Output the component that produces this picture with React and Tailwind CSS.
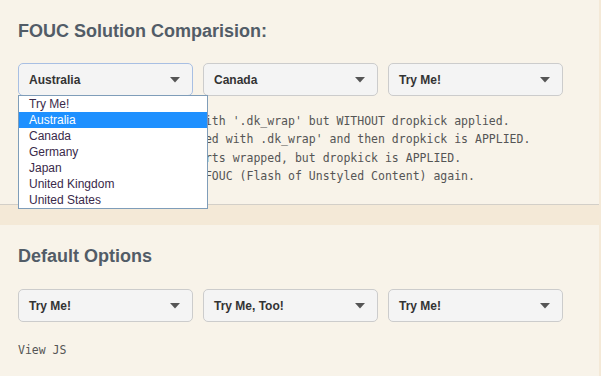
const countries = ["Try Me!", "Australia", "Canada", "Germany", "Japan", "United Kingdom", "United States"];

const notes = [
  "1. Left select is wrapped with '.dk_wrap' but WITHOUT dropkick applied.",
  "2. Middle one is also wrapped with .dk_wrap' and then dropkick is APPLIED.",
  "3. The 3rd select, also starts wrapped, but dropkick is APPLIED.",
  "4. Result: you never see a FOUC (Flash of Unstyled Content) again.",
];

const Arrow = () => (
  <svg width="10" height="6" viewBox="0 0 10 6" className="shrink-0">
    <path d="M0 0 L10 0 L5 5.5 Z" fill="#555" />
  </svg>
);

const Select = ({ label, focused }) => (
  <div
    className={`flex h-[33px] w-[175px] items-center justify-between rounded-[5px] border bg-[#f4f4f4] pl-[10px] pr-[12px] ${
      focused ? "border-[#a8bfe3]" : "border-[#cccccc]"
    }`}
  >
    <span className="text-[12px] font-bold text-[#333]">{label}</span>
    <Arrow />
  </div>
);

const App = () => {
  return (
    <div className="flex min-h-screen bg-[#f8f3e9] font-['Liberation_Sans',Arial,sans-serif]">
      <div className="flex-1">
        <section className="relative h-[205px] border-b border-[#d3cfc8] px-[18px] pt-[20px]">
          <h2 className="text-[18px] font-bold leading-[22px] text-[#525c67]">FOUC Solution Comparision:</h2>
          <div className="mt-[21px] flex gap-[10px]">
            <Select label="Australia" focused />
            <Select label="Canada" />
            <Select label="Try Me!" />
          </div>
          <div className="mt-[16px] font-['DejaVu_Sans_Mono',monospace] text-[11.5px] leading-[18.3px] whitespace-pre text-[#555]">
            {notes.map((n) => (
              <p key={n}>{n}</p>
            ))}
          </div>
          <ul className="absolute left-[18px] top-[95px] w-[190px] border border-[#7f9db9] bg-white">
            {countries.map((c) => (
              <li
                key={c}
                className={`h-[16px] pl-[10px] text-[12px] leading-[16px] ${
                  c === "Australia" ? "bg-[#1e90ff] text-white" : "text-[#3a2a4a]"
                }`}
              >
                {c}
              </li>
            ))}
          </ul>
        </section>
        <div className="h-[20px] bg-[#f4e9d7]" />
        <section className="px-[18px] pt-[20px]">
          <h2 className="text-[18px] font-bold leading-[22px] text-[#525c67]">Default Options</h2>
          <div className="mt-[22px] flex gap-[10px]">
            <Select label="Try Me!" />
            <Select label="Try Me, Too!" />
            <Select label="Try Me!" />
          </div>
          <p className="mt-[19px] font-['DejaVu_Sans_Mono',monospace] text-[11.5px] leading-[18px] text-[#555]">View JS</p>
        </section>
      </div>
      <div className="w-[2px] bg-[#f4e9d7]" />
    </div>
  );
};

export default App;
